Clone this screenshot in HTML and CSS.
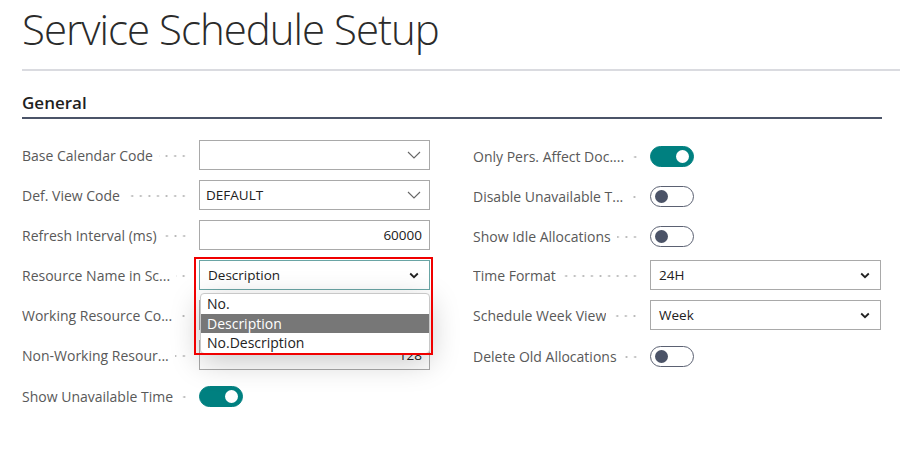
FILE: index.html
```html
<!DOCTYPE html>
<html lang="en">
<head>
<meta charset="utf-8">
<title>Service Schedule Setup</title>
<link rel="stylesheet" href="styles.css">
</head>
<body>
<div class="page">
  <h1 class="title">Service Schedule Setup</h1>
  <div class="divider"></div>
  <section class="group">
    <h2 class="group-title">General</h2>
    <div class="cols">
      <div class="col">
        <div class="row">
          <div class="label"><span class="label-text">Base Calendar Code</span><span class="leader"></span></div>
          <div class="field combo"><span class="value"></span>
            <svg class="chev-thin" width="14" height="8" viewBox="0 0 14 8"><polyline points="1,1 7,7 13,1" fill="none" stroke="#666" stroke-width="1.1"/></svg>
          </div>
        </div>
        <div class="row">
          <div class="label"><span class="label-text">Def. View Code</span><span class="leader"></span></div>
          <div class="field combo"><span class="value">DEFAULT</span>
            <svg class="chev-thin" width="14" height="8" viewBox="0 0 14 8"><polyline points="1,1 7,7 13,1" fill="none" stroke="#666" stroke-width="1.1"/></svg>
          </div>
        </div>
        <div class="row">
          <div class="label"><span class="label-text">Refresh Interval (ms)</span><span class="leader"></span></div>
          <div class="field num"><span class="value">60000</span></div>
        </div>
        <div class="row">
          <div class="label"><span class="label-text">Resource Name in Sc...</span><span class="leader"></span></div>
          <div class="field-wrap">
            <div class="field select focused"><span class="value">Description</span>
              <svg class="chev-bold" width="10" height="7" viewBox="0 0 10 7"><polyline points="1.2,1.5 5,5.2 8.8,1.5" fill="none" stroke="#222" stroke-width="1.8"/></svg>
            </div>
            <ul class="listbox">
              <li class="option">No.</li>
              <li class="option selected">Description</li>
              <li class="option">No.Description</li>
            </ul>
            <div class="highlight"></div>
          </div>
        </div>
        <div class="row">
          <div class="label"><span class="label-text">Working Resource Co...</span><span class="leader"></span></div>
          <div class="field num"><span class="value"></span></div>
        </div>
        <div class="row">
          <div class="label"><span class="label-text">Non-Working Resour...</span><span class="leader"></span></div>
          <div class="field num"><span class="value">128</span></div>
        </div>
        <div class="row row-toggle">
          <div class="label"><span class="label-text">Show Unavailable Time</span><span class="leader"></span></div>
          <div class="toggle on"><span class="knob"></span></div>
        </div>
      </div>
      <div class="col">
        <div class="row row-toggle">
          <div class="label"><span class="label-text">Only Pers. Affect Doc....</span><span class="leader"></span></div>
          <div class="toggle on"><span class="knob"></span></div>
        </div>
        <div class="row row-toggle">
          <div class="label"><span class="label-text">Disable Unavailable T...</span><span class="leader"></span></div>
          <div class="toggle"><span class="knob"></span></div>
        </div>
        <div class="row row-toggle">
          <div class="label"><span class="label-text">Show Idle Allocations</span><span class="leader"></span></div>
          <div class="toggle"><span class="knob"></span></div>
        </div>
        <div class="row">
          <div class="label"><span class="label-text">Time Format</span><span class="leader"></span></div>
          <div class="field select"><span class="value">24H</span>
            <svg class="chev-bold" width="10" height="7" viewBox="0 0 10 7"><polyline points="1.2,1.5 5,5.2 8.8,1.5" fill="none" stroke="#222" stroke-width="1.8"/></svg>
          </div>
        </div>
        <div class="row">
          <div class="label"><span class="label-text">Schedule Week View</span><span class="leader"></span></div>
          <div class="field select"><span class="value">Week</span>
            <svg class="chev-bold" width="10" height="7" viewBox="0 0 10 7"><polyline points="1.2,1.5 5,5.2 8.8,1.5" fill="none" stroke="#222" stroke-width="1.8"/></svg>
          </div>
        </div>
        <div class="row row-toggle">
          <div class="label"><span class="label-text">Delete Old Allocations</span><span class="leader"></span></div>
          <div class="toggle"><span class="knob"></span></div>
        </div>
      </div>
    </div>
  </section>
</div>
</body>
</html>
```

FILE: styles.css
```css
* { box-sizing: border-box; }
html, body { margin: 0; padding: 0; background: #fff; }
body {
  font-family: "Open Sans", "Noto Sans", "Liberation Sans", sans-serif;
  color: #212121;
  width: 900px;
  height: 459px;
  overflow: hidden;
}
.page { padding: 1px 0 0 22px; }
.title {
  margin: 0;
  font-size: 42px;
  font-weight: 300;
  line-height: 56px;
  color: #2b2b2b;
  letter-spacing: -1px;
}
.divider {
  margin-top: 12px;
  height: 2px;
  background: #dadbe0;
}
.group { margin-right: 18px; }
.group-title {
  margin: 20px 0 0;
  font-size: 17px;
  font-weight: 600;
  line-height: 24px;
  color: #1f1f1f;
  padding-bottom: 2px;
  border-bottom: 2px solid #4b5468;
}
.cols {
  display: flex;
  gap: 43px;
  margin-top: 21px;
}
.col { width: 408px; display: flex; flex-direction: column; gap: 10px; }
.row { display: flex; align-items: center; height: 30px; }
.row-toggle { padding-top: 2px; }
.label {
  display: flex;
  align-items: center;
  width: 177px;
  flex: none;
  font-size: 14px;
  color: #595959;
}
.label-text { white-space: nowrap; overflow: hidden; max-width: 160px; }
.leader {
  flex: 1;
  height: 4px;
  margin: 2px 11px 0 6px;
  background: radial-gradient(circle, #b8b8b8 0.8px, transparent 1.3px) right center / 8.6px 4px repeat-x;
}
.field {
  width: 231px;
  height: 30px;
  border: 1px solid #a9a9a9;
  background: #fff;
  display: flex;
  align-items: center;
  padding: 0 7px 0 6px;
  font-size: 13.5px;
  color: #212121;
}
.field .value { flex: 1; white-space: nowrap; }
.field.num .value { text-align: right; padding-right: 0; }
.field.combo { padding-right: 8px; }
.chev-thin { flex: none; }
.chev-bold { flex: none; margin-right: 3px; }
.field.select { padding-left: 8px; }
.field.focused { border-color: #6aa5a5; }
.field-wrap { position: relative; }
.listbox {
  position: absolute;
  left: 1px;
  top: 33px;
  width: 230px;
  margin: 0;
  padding: 0;
  list-style: none;
  background: #fff;
  border: 1px solid #c8c8c8;
  border-radius: 4px;
  box-shadow: 0 8px 30px rgba(0,0,0,0.22);
  overflow: hidden;
  z-index: 2;
}
.option {
  height: 19.7px;
  line-height: 19px;
  padding-left: 6px;
  font-size: 14px;
  color: #222;
}
.option.selected { background: #777; color: #fff; }
.highlight {
  position: absolute;
  left: -5px;
  top: -3px;
  width: 239px;
  height: 98px;
  border: 2px solid #f00000;
  z-index: 3;
  pointer-events: none;
}
.toggle {
  width: 44px;
  height: 21px;
  border-radius: 11px;
  border: 1px solid #5b6172;
  background: #fff;
  position: relative;
  flex: none;
}
.toggle .knob {
  position: absolute;
  top: 3px;
  left: 4px;
  width: 13px;
  height: 13px;
  border-radius: 50%;
  background: #4b5367;
}
.toggle.on { background: #008080; border-color: #008080; }
.toggle.on .knob { left: auto; right: 4px; background: #fff; }
```
